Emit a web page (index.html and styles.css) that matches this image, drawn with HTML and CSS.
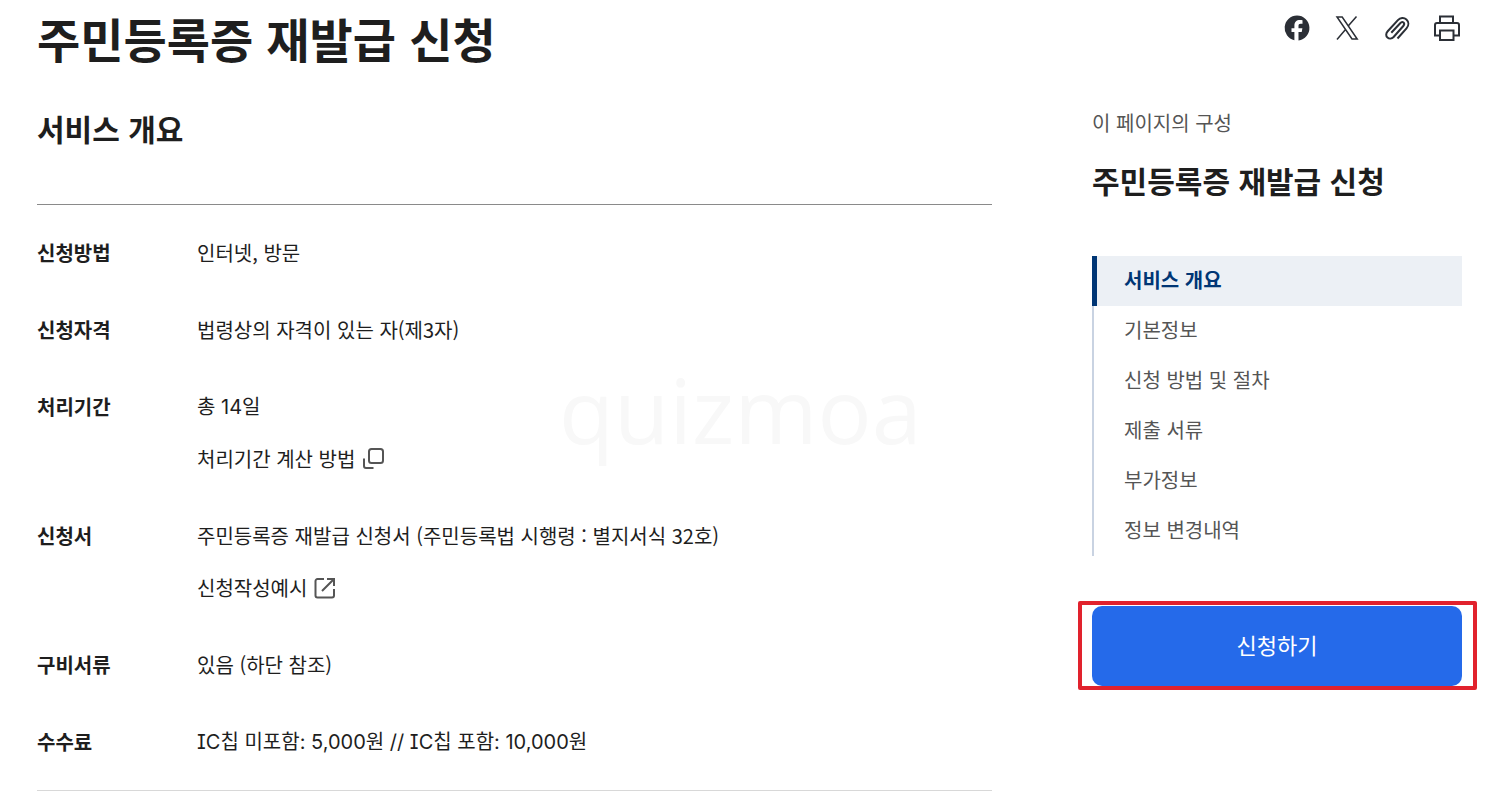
FILE: index.html
```html
<!DOCTYPE html>
<html lang="ko">
<head>
<meta charset="utf-8">
<meta name="viewport" content="width=device-width, initial-scale=1">
<title>주민등록증 재발급 신청</title>
<link rel="stylesheet" href="styles.css">
</head>
<body>
<div class="page">
  <main class="content">
    <h1 class="page-title">주민등록증 재발급 신청</h1>
    <h2 class="section-title">서비스 개요</h2>
    <dl class="summary">
      <div class="summary-row">
        <dt>신청방법</dt>
        <dd><p>인터넷, 방문</p></dd>
      </div>
      <div class="summary-row">
        <dt>신청자격</dt>
        <dd><p>법령상의 자격이 있는 자(제3자)</p></dd>
      </div>
      <div class="summary-row">
        <dt>처리기간</dt>
        <dd>
          <p class="figures">총 14일</p>
          <button type="button" class="text-link">처리기간 계산 방법
            <svg class="link-icon" viewBox="0 0 24 24" aria-hidden="true"><rect x="8" y="2" width="14" height="14" rx="2.5"/><path d="M3 11.500V19a2 2 0 0 0 2 2h7.500"/></svg>
          </button>
        </dd>
      </div>
      <div class="summary-row">
        <dt>신청서</dt>
        <dd>
          <p>주민등록증 재발급 신청서 (주민등록법 시행령 : 별지서식 32호)</p>
          <a href="#" class="text-link">신청작성예시
            <svg class="link-icon" viewBox="0 0 24 24" aria-hidden="true"><path d="M11 3H4.500a2 2 0 0 0-2 2v14.500a2 2 0 0 0 2 2H19a2 2 0 0 0 2-2V13M9 15 20.500 3.500M14 3h7v7"/></svg>
          </a>
        </dd>
      </div>
      <div class="summary-row">
        <dt>구비서류</dt>
        <dd><p>있음 (하단 참조)</p></dd>
      </div>
      <div class="summary-row">
        <dt>수수료</dt>
        <dd><p class="figures">IC칩 미포함: 5,000원 // IC칩 포함: 10,000원</p></dd>
      </div>
    </dl>
    <span class="watermark" aria-hidden="true">quizmoa</span>
  </main>

  <aside class="side">
    <div class="share">
      <button type="button" class="share-button" aria-label="페이스북 공유">
        <svg viewBox="0 0 30 30" aria-hidden="true"><path fill="currentColor" d="M15 2.500a12.500 12.500 0 0 0-2.600 24.700v-8.100H9.500v-3.900h2.900v-2.300c0-4 2-5.900 5.600-5.900.9 0 1.900.1 2.500.3v3.500h-1.800c-1.600 0-2.200.8-2.200 2v2.400h3.900l-.7 3.900h-3.200v8.300A12.500 12.500 0 0 0 15 2.500z"/></svg>
      </button>
      <button type="button" class="share-button" aria-label="X 공유">
        <svg viewBox="0 0 30 30" aria-hidden="true"><path fill="none" stroke="currentColor" stroke-width="1.500" d="M5 4h5.200l15 22H20zM24.500 3.500l-8.300 9.600M13.300 16.700 5 26.500"/></svg>
      </button>
      <button type="button" class="share-button" aria-label="링크 복사">
        <svg viewBox="0 0 30 30" aria-hidden="true"><path fill="none" stroke="currentColor" stroke-width="2" stroke-linejoin="round" d="M15.500 25.500 24.500 15.300C27.200 12.200 26.700 8.500 24.400 6.400 22 4.300 18.300 4.500 15.900 7.200L5.700 18.200c-2 2.200-1.900 4.900-.2 6.400 1.700 1.500 4.300 1.300 6.100-.6l9.700-11c1.100-1.300 1.100-2.600.2-3.400-.9-.8-2.200-.6-3.300.6L9.300 19.700"/></svg>
      </button>
      <button type="button" class="share-button" aria-label="인쇄">
        <svg viewBox="0 0 30 30" aria-hidden="true"><path fill="none" stroke="currentColor" stroke-width="2" d="M8 10V3.500h13V10M8 22.500H3V12a2 2 0 0 1 2-2h20a2 2 0 0 1 2 2v10.500h-5M8 17.500h13.500V27H8z"/></svg>
      </button>
    </div>
    <p class="side-label">이 페이지의 구성</p>
    <p class="side-title">주민등록증 재발급 신청</p>
    <nav class="toc" aria-label="이 페이지의 구성">
      <a href="#" class="toc-link is-active" aria-current="true">서비스 개요</a>
      <a href="#" class="toc-link">기본정보</a>
      <a href="#" class="toc-link">신청 방법 및 절차</a>
      <a href="#" class="toc-link">제출 서류</a>
      <a href="#" class="toc-link">부가정보</a>
      <a href="#" class="toc-link">정보 변경내역</a>
    </nav>
    <div class="apply">
      <button type="button" class="apply-button">신청하기</button>
      <span class="apply-highlight" aria-hidden="true"></span>
    </div>
  </aside>
</div>
</body>
</html>
```
FILE: styles.css
```css
* {
  box-sizing: border-box;
}

body,
h1,
h2,
p,
dl,
dd {
  margin: 0;
}

body {
  background: #fff;
  color: #1e1e1e;
  font: 20px/32px "Noto Sans CJK KR", sans-serif;
}

button {
  padding: 0;
  border: 0;
  background: none;
  color: inherit;
  font: inherit;
  cursor: pointer;
}

a {
  color: inherit;
  text-decoration: none;
}

.page {
  display: flex;
  gap: 100px;
  padding: 8px 24px 16px 37px;
}

.content {
  position: relative;
  flex: 1;
  min-width: 0;
}

.page-title {
  font-size: 47px;
  line-height: 60px;
}

.section-title {
  margin-top: 40px;
  font-size: 30px;
  line-height: 40px;
}

.summary {
  display: grid;
  gap: 45px;
  margin-top: 56px;
  padding: 32px 0;
  border-top: 1px solid #8a8a8a;
  border-bottom: 1px solid #d8d8d8;
}

.summary-row {
  display: grid;
  grid-template-columns: 160px 1fr;
}

.summary-row dt {
  font-weight: 700;
}

.summary-row dd {
  display: grid;
  justify-items: start;
  gap: 20px;
}

.figures {
  font-family: Inter, "Noto Sans CJK KR", sans-serif;
  font-feature-settings: "cv08";
}

.text-link {
  display: flex;
  align-items: center;
  gap: 6px;
}

.link-icon {
  width: 24px;
  height: 24px;
  fill: none;
  stroke: #555;
  stroke-width: 2;
}

.watermark {
  position: absolute;
  z-index: -1;
  top: 341px;
  left: 522px;
  color: #f8f8f8;
  font: 90px/120px "Open Sans", sans-serif;
}

.side {
  flex: 0 0 370px;
  padding-top: 5px;
}

.share {
  display: flex;
  justify-content: flex-end;
  gap: 20px;
}

.share-button {
  width: 30px;
  height: 30px;
  color: #2b2f36;
}

.share-button svg {
  display: block;
}

.side-label {
  margin-top: 64px;
  color: #555;
}

.side-title {
  margin-top: 21px;
  font-size: 30px;
  font-weight: 700;
  line-height: 40px;
}

.toc {
  margin-top: 56px;
}

.toc-link {
  display: block;
  height: 50px;
  padding-left: 30px;
  border-left: 2px solid #c9d3e2;
  color: #555;
  line-height: 48px;
}

.toc-link.is-active {
  padding-left: 27px;
  border-left: 5px solid #003675;
  background: #ecf0f5;
  color: #003675;
  font-weight: 700;
}

.apply {
  position: relative;
  margin-top: 50px;
}

.apply-button {
  display: block;
  width: 100%;
  height: 80px;
  padding-bottom: 4px;
  border-radius: 10px;
  background: #256aea;
  color: #fff;
  font-size: 22px;
}

.apply-highlight {
  position: absolute;
  inset: -5px -15px -4px -14px;
  border: 4px solid #e1222d;
  border-radius: 2px;
  pointer-events: none;
}
```
